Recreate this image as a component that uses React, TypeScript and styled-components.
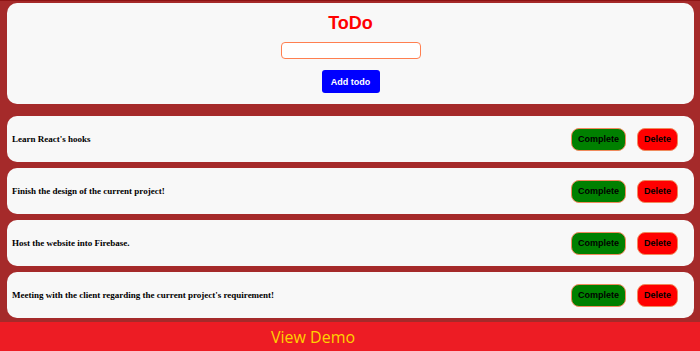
import styled, { createGlobalStyle } from "styled-components";

const todos = [
  "Learn React's hooks",
  "Finish the design of the current project!",
  "Host the website into Firebase.",
  "Meeting with the client regarding the current project's requirement!",
];

const GlobalStyle = createGlobalStyle`
  html, body {
    margin: 0;
    padding: 0;
    background-color: #a52a2a;
  }
`;

const App = () => {
  return (
    <Page>
      <GlobalStyle />
      <Wrapper>
        <FormCard>
          <Title>ToDo</Title>
          <TodoInput type="text" />
          <AddButton>Add todo</AddButton>
        </FormCard>

        <TodoList>
          {todos.map((item, index) => (
            <TodoCard key={index}>
              <TodoText>{item}</TodoText>
              <Actions>
                <ActionButton $color="#008000">Complete</ActionButton>
                <ActionButton $color="#ff0000">Delete</ActionButton>
              </Actions>
            </TodoCard>
          ))}
        </TodoList>
      </Wrapper>

      <DemoBar>View Demo</DemoBar>
    </Page>
  );
};

const Page = styled.div`
  display: flex;
  flex-direction: column;
  width: 700px;
  height: 351px;
  overflow: hidden;
  background-color: #a52a2a;
  border-top: 1px solid #8e1414;
  box-sizing: border-box;
`;

const Wrapper = styled.div`
  display: flex;
  flex-direction: column;
  padding: 2px 6px 0 7px;
`;

const FormCard = styled.div`
  display: flex;
  flex-direction: column;
  align-items: center;
  height: 101px;
  box-sizing: border-box;
  padding-top: 10px;
  background-color: #f8f8f8;
  border-radius: 10px;
`;

const Title = styled.h1`
  margin: 0;
  font-family: "Liberation Sans", Arial, sans-serif;
  font-size: 18px;
  line-height: 20px;
  font-weight: 700;
  color: #ff0000;
`;

const TodoInput = styled.input`
  margin-top: 9px;
  width: 140px;
  height: 17px;
  box-sizing: border-box;
  border: 1px solid #ff7f50;
  border-radius: 4px;
  background-color: #ffffff;
  outline: none;
`;

const AddButton = styled.button`
  margin-top: 11px;
  width: 58px;
  height: 23px;
  padding: 0;
  border: none;
  border-radius: 3px;
  background-color: #0000ff;
  color: #ffffff;
  font-family: "Liberation Sans", Arial, sans-serif;
  font-size: 9px;
  font-weight: 700;
`;

const TodoList = styled.div`
  display: flex;
  flex-direction: column;
  gap: 6px;
  margin-top: 12px;
`;

const TodoCard = styled.div`
  display: flex;
  align-items: center;
  justify-content: space-between;
  height: 46px;
  box-sizing: border-box;
  padding: 0 16px 0 5px;
  background-color: #f8f8f8;
  border-radius: 10px;
`;

const TodoText = styled.p`
  margin: 0;
  font-family: "Liberation Serif", "Times New Roman", serif;
  font-size: 9px;
  font-weight: 700;
  color: #000000;
`;

const Actions = styled.div`
  display: flex;
  gap: 11px;
`;

const ActionButton = styled.button<{ $color: string }>`
  height: 23px;
  padding: 0 6px;
  border: 1px solid #f08a5d;
  border-radius: 8px;
  background-color: ${(p) => p.$color};
  color: #000000;
  font-family: "Liberation Sans", Arial, sans-serif;
  font-size: 9px;
  font-weight: 700;
`;

const DemoBar = styled.div`
  display: flex;
  align-items: center;
  justify-content: center;
  margin-top: auto;
  height: 29px;
  padding-right: 74px;
  background-color: #ed1c24;
  color: #ffd200;
  font-family: "Open Sans", sans-serif;
  font-size: 16px;
`;

export default App;
